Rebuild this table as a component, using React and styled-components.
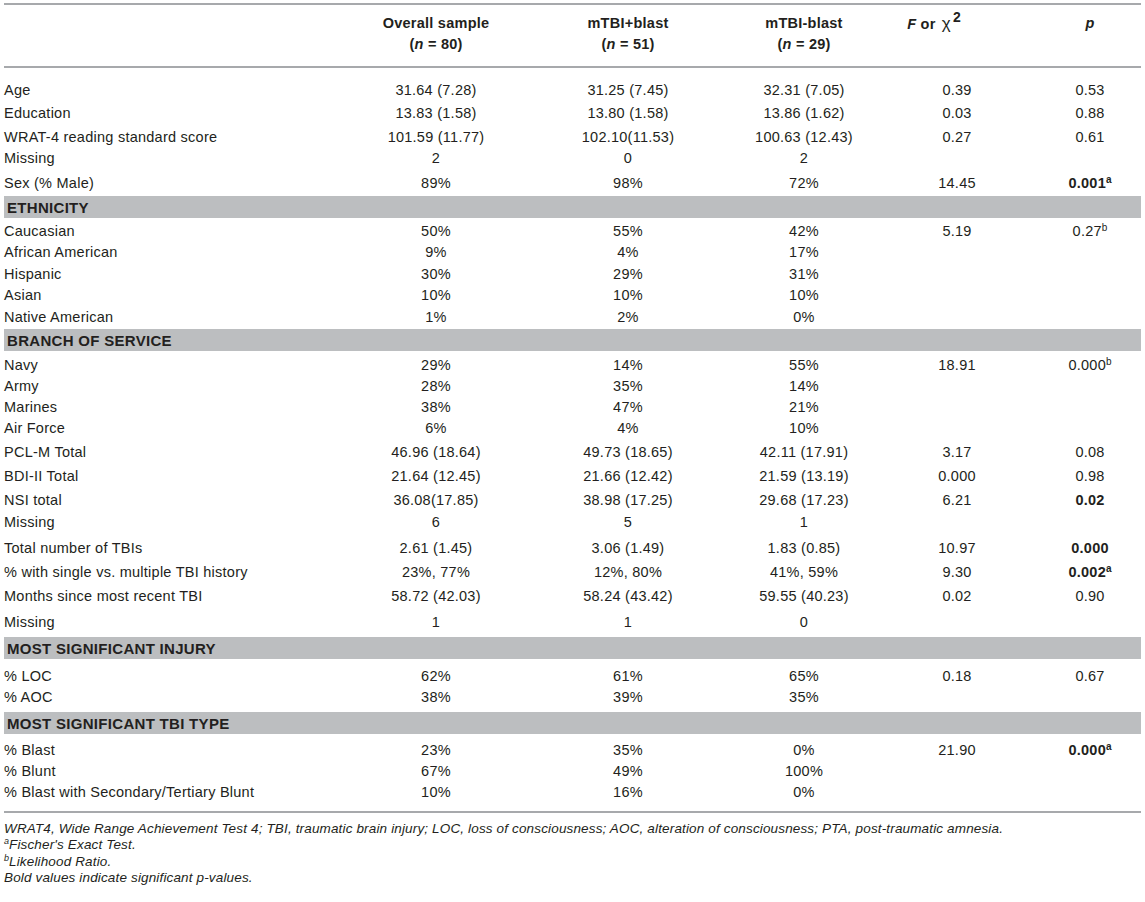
import React from "react";
import styled, { createGlobalStyle } from "styled-components";

const Global = createGlobalStyle`
  html, body { margin: 0; padding: 0; background: #ffffff; }
  body {
    font-family: "Liberation Sans", Arial, Helvetica, sans-serif;
    color: #231f20;
  }
`;

const COLS = "336px 192px 192px 160px 146px 111px";

const Page = styled.div`
  width: 1137px;
  margin: 3px 0 0 4px;
`;

const Table = styled.div`
  display: flex;
  flex-direction: column;
  border-top: 2px solid #a7a9ac;
  border-bottom: 2px solid #a7a9ac;
  font-size: 14.5px;
  letter-spacing: 0.25px;
`;

const HeadRow = styled.div`
  display: grid;
  grid-template-columns: ${COLS};
  padding: 8px 0 11px;
  border-bottom: 2px solid #a7a9ac;
  line-height: 21px;
  font-weight: 700;
`;

const HeadCell = styled.div`
  text-align: center;
  padding-left: ${(p) => p.$pl || 0}px;
  padding-right: ${(p) => p.$pr || 0}px;
  white-space: nowrap;
`;

const Chi = styled.span`
  font-weight: 400;
  font-size: 17px;
  margin-left: 2px;
`;

const Row = styled.div`
  display: grid;
  grid-template-columns: ${COLS};
  padding: ${(p) => p.$pt}px 0 ${(p) => p.$pb}px;
  line-height: 18px;
`;

const Label = styled.div`
  white-space: nowrap;
`;

const Value = styled.div`
  text-align: center;
  white-space: nowrap;
  font-weight: ${(p) => (p.$bold ? 700 : 400)};
  padding-left: ${(p) => p.$pl || 0}px;
`;

const Band = styled.div`
  height: 22px;
  line-height: 23px;
  background: #bcbec0;
  padding-left: 3px;
  font-weight: 700;
  font-size: 15px;
  letter-spacing: 0.3px;
`;

const Sup = styled.sup`
  font-size: ${(p) => p.$size || 10}px;
  line-height: 0;
  vertical-align: baseline;
  position: relative;
  top: ${(p) => p.$top || -6}px;
  letter-spacing: 0;
  margin-left: ${(p) => p.$ml || 0}px;
`;

const Notes = styled.div`
  padding-top: 8px;
  font-style: italic;
  font-size: 13.5px;
  line-height: 16.4px;
  letter-spacing: 0.15px;
  color: #231f20;
`;

const Note = styled.div``;

const Ital = styled.i``;

const rows = [
  { l: "Age", v: ["31.64 (7.28)", "31.25 (7.45)", "32.31 (7.05)", "0.39", "0.53"], pt: 13, pb: 3 },
  { l: "Education", v: ["13.83 (1.58)", "13.80 (1.58)", "13.86 (1.62)", "0.03", "0.88"], pt: 2, pb: 3 },
  { l: "WRAT-4 reading standard score", v: ["101.59 (11.77)", "102.10(11.53)", "100.63 (12.43)", "0.27", "0.61"], pt: 3, pb: 2 },
  { l: "Missing", v: ["2", "0", "2", "", ""], pt: 1, pb: 3 },
  { l: "Sex (% Male)", v: ["89%", "98%", "72%", "14.45", "0.001"], sup: "a", bold: true, pt: 4, pb: 4 },
  { band: "ETHNICITY" },
  { l: "Caucasian", v: ["50%", "55%", "42%", "5.19", "0.27"], sup: "b", pt: 4, pb: 2 },
  { l: "African American", v: ["9%", "4%", "17%", "", ""], pt: 1, pb: 2 },
  { l: "Hispanic", v: ["30%", "29%", "31%", "", ""], pt: 2, pb: 1 },
  { l: "Asian", v: ["10%", "10%", "10%", "", ""], pt: 2, pb: 2 },
  { l: "Native American", v: ["1%", "2%", "0%", "", ""], pt: 2, pb: 3 },
  { band: "BRANCH OF SERVICE" },
  { l: "Navy", v: ["29%", "14%", "55%", "18.91", "0.000"], sup: "b", pt: 5, pb: 2 },
  { l: "Army", v: ["28%", "35%", "14%", "", ""], pt: 1, pb: 2 },
  { l: "Marines", v: ["38%", "47%", "21%", "", ""], pt: 1, pb: 2 },
  { l: "Air Force", v: ["6%", "4%", "10%", "", ""], pt: 1, pb: 3 },
  { l: "PCL-M Total", v: ["46.96 (18.64)", "49.73 (18.65)", "42.11 (17.91)", "3.17", "0.08"], pt: 3, pb: 3 },
  { l: "BDI-II Total", v: ["21.64 (12.45)", "21.66 (12.42)", "21.59 (13.19)", "0.000", "0.98"], pt: 3, pb: 3 },
  { l: "NSI total", v: ["36.08(17.85)", "38.98 (17.25)", "29.68 (17.23)", "6.21", "0.02"], bold: true, pt: 3, pb: 2 },
  { l: "Missing", v: ["6", "5", "1", "", ""], pt: 2, pb: 3 },
  { l: "Total number of TBIs", v: ["2.61 (1.45)", "3.06 (1.49)", "1.83 (0.85)", "10.97", "0.000"], bold: true, pt: 5, pb: 3 },
  { l: "% with single vs. multiple TBI history", v: ["23%, 77%", "12%, 80%", "41%, 59%", "9.30", "0.002"], sup: "a", bold: true, pt: 3, pb: 3 },
  { l: "Months since most recent TBI", v: ["58.72 (42.03)", "58.24 (43.42)", "59.55 (40.23)", "0.02", "0.90"], pt: 3, pb: 4 },
  { l: "Missing", v: ["1", "1", "0", "", ""], pt: 4, pb: 6 },
  { band: "MOST SIGNIFICANT INJURY" },
  { l: "% LOC", v: ["62%", "61%", "65%", "0.18", "0.67"], pt: 8, pb: 2 },
  { l: "% AOC", v: ["38%", "39%", "35%", "", ""], pt: 1, pb: 6 },
  { band: "MOST SIGNIFICANT TBI TYPE" },
  { l: "% Blast", v: ["23%", "35%", "0%", "21.90", "0.000"], sup: "a", bold: true, pt: 7, pb: 2 },
  { l: "% Blunt", v: ["67%", "49%", "100%", "", ""], pt: 1, pb: 2 },
  { l: "% Blast with Secondary/Tertiary Blunt", v: ["10%", "16%", "0%", "", ""], pt: 1, pb: 10 },
];

function DataRow({ r }) {
  return (
    <Row $pt={r.pt} $pb={r.pb}>
      <Label>{r.l}</Label>
      <Value>{r.v[0]}</Value>
      <Value>{r.v[1]}</Value>
      <Value>{r.v[2]}</Value>
      <Value>{r.v[3]}</Value>
      <Value $pl={9} $bold={r.bold}>
        {r.v[4]}
        {r.sup && <Sup $size={10} $top={-5}>{r.sup}</Sup>}
      </Value>
    </Row>
  );
}

export default function App() {
  return (
    <Page>
      <Global />
      <Table>
        <HeadRow>
          <HeadCell />
          <HeadCell>
            Overall sample
            <br />(<Ital>n</Ital> = 80)
          </HeadCell>
          <HeadCell>
            mTBI+blast
            <br />(<Ital>n</Ital> = 51)
          </HeadCell>
          <HeadCell>
            mTBI-blast
            <br />(<Ital>n</Ital> = 29)
          </HeadCell>
          <HeadCell $pr={46}>
            <Ital>F</Ital> or <Chi>χ</Chi>
            <Sup $size={14} $top={-7} $ml={2}>2</Sup>
          </HeadCell>
          <HeadCell $pl={9}>
            <Ital>p</Ital>
          </HeadCell>
        </HeadRow>
        {rows.map((r, i) =>
          r.band ? <Band key={i}>{r.band}</Band> : <DataRow key={i} r={r} />
        )}
      </Table>
      <Notes>
        <Note>
          WRAT4, Wide Range Achievement Test 4; TBI, traumatic brain injury; LOC, loss of
          consciousness; AOC, alteration of consciousness; PTA, post-traumatic amnesia.
        </Note>
        <Note>
          <Sup $size={9} $top={-5}>a</Sup>Fischer's Exact Test.
        </Note>
        <Note>
          <Sup $size={9} $top={-5}>b</Sup>Likelihood Ratio.
        </Note>
        <Note>Bold values indicate significant p-values.</Note>
      </Notes>
    </Page>
  );
}
